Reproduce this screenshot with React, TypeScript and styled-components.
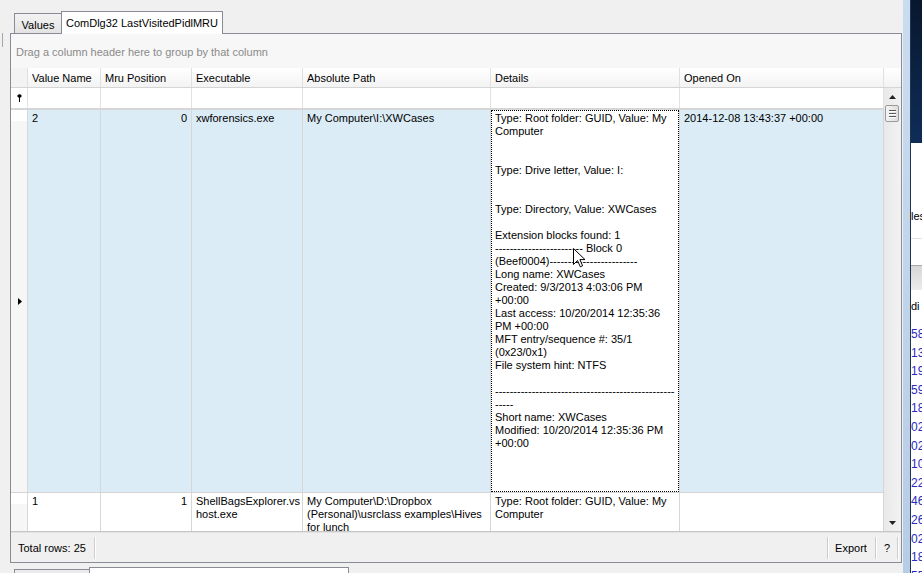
import React from 'react';
import styled, { createGlobalStyle } from 'styled-components';

const Global = createGlobalStyle`
  html, body { margin: 0; padding: 0; background: #f0f0f0; overflow: hidden; }
  body { font-family: "Liberation Sans", Arial, sans-serif; font-size: 11px; color: #000; }
  * { box-sizing: border-box; }
`;

const COLS = '17px 73px 91px 111px 188px 189px 204px';

const Page = styled.div`
  position: relative;
  display: flex;
  width: 922px;
  height: 573px;
  overflow: hidden;
  background: #f0f0f0;
`;

const LeftEdge = styled.div`
  width: 10px;
  flex: none;
  padding-top: 33px;
`;

const EdgeMark = styled.div`
  width: 1px;
  height: 14px;
  margin-left: 2px;
  background: #a7a7a7;
`;

const Main = styled.div`
  width: 892px;
  flex: none;
  display: flex;
  flex-direction: column;
`;

const TabStrip = styled.div`
  height: 33px;
  flex: none;
  display: flex;
  align-items: flex-end;
  padding-left: 4px;
  position: relative;
  z-index: 2;
`;

const Tab = styled.div<{ $active?: boolean; $w: number }>`
  width: ${p => p.$w}px;
  height: ${p => (p.$active ? 23 : 20)}px;
  margin-bottom: ${p => (p.$active ? -1 : 0)}px;
  border: 1px solid #898c95;
  border-bottom: none;
  ${p => (p.$active ? '' : 'border-right: none;')}
  background: ${p => (p.$active ? '#ffffff' : 'linear-gradient(#f3f3f3, #e3e3e3)')};
  display: flex;
  align-items: center;
  justify-content: center;
  padding-top: ${p => (p.$active ? 0 : 2)}px;
  white-space: nowrap;
`;

const Panel = styled.div`
  height: 530px;
  flex: none;
  border: 1px solid #898c95;
  display: flex;
  flex-direction: column;
  background: #f0f0f0;
`;

const GroupArea = styled.div`
  height: 34px;
  flex: none;
  background: #f7f7f7;
  color: #8a8a8a;
  padding: 12px 0 0 5px;
  line-height: 13px;
`;

const Grid = styled.div`
  height: 464px;
  flex: none;
  display: flex;
  flex-direction: column;
  background: #fff;
  border-bottom: 1px solid #c6c6c6;
`;

const HeaderRow = styled.div`
  display: grid;
  grid-template-columns: ${COLS} 17px;
  height: 20px;
  flex: none;
  background: linear-gradient(#ffffff, #f3f3f3);
  border-bottom: 1px solid #d5d5d5;
`;

const HeaderCell = styled.div<{ $indicator?: boolean; $last?: boolean }>`
  display: flex;
  align-items: center;
  padding-left: 4px;
  white-space: nowrap;
  overflow: hidden;
  border-right: ${p => (p.$last ? 'none' : '1px solid #e0e0e0')};
  ${p => (p.$indicator ? 'background: #f3f3f3;' : '')}
`;

const BodyWrap = styled.div`
  height: 443px;
  flex: none;
  display: flex;
`;

const Rows = styled.div`
  width: 873px;
  flex: none;
  display: flex;
  flex-direction: column;
  overflow: hidden;
`;

const FilterRow = styled.div`
  display: grid;
  grid-template-columns: ${COLS};
  height: 22px;
  flex: none;
  background: #fff;
  border-bottom: 2px solid #d6d6d6;
`;

const FilterCell = styled.div`
  border-right: 1px solid #e2e2e2;
  display: flex;
  align-items: center;
  justify-content: center;
`;

const DataRow = styled.div<{ $h: number; $bg: string }>`
  display: grid;
  grid-template-columns: ${COLS};
  height: ${p => p.$h}px;
  flex: none;
  background: ${p => p.$bg};
  border-bottom: 1px solid #d4d4d4;
`;

const Indicator = styled.div`
  border-right: 1px solid #d9d9d9;
  background: linear-gradient(#ffffff 0 11px, #f6f6f6 11px);
  display: flex;
  align-items: center;
  padding-left: 7px;
`;

const Cell = styled.div<{ $right?: boolean }>`
  border-right: 1px solid #d6d6d6;
  padding: 2px 4px 0 4px;
  line-height: 13px;
  white-space: pre;
  overflow: hidden;
  text-align: ${p => (p.$right ? 'right' : 'left')};
`;

const FocusCell = styled.div`
  border-right: 1px solid #d6d6d6;
  background: #fff;
  overflow: hidden;
`;

const FocusBox = styled.div`
  height: 100%;
  border: 1px dotted #000;
  padding: 1px 3px 0 3px;
  line-height: 13px;
  white-space: pre;
`;

const Line = styled.div`
  height: 13px;
`;

const Scrollbar = styled.div`
  width: 17px;
  flex: none;
  display: flex;
  flex-direction: column;
  background: linear-gradient(90deg, #e9e9e9, #f2f2f2);
`;

const ScrollBtn = styled.div`
  height: 17px;
  flex: none;
  display: flex;
  align-items: center;
  justify-content: center;
`;

const Thumb = styled.div`
  height: 17px;
  width: 14px;
  margin-left: 1px;
  flex: none;
  border: 1px solid #9a9a9a;
  border-radius: 2px;
  background: linear-gradient(90deg, #f4f4f4, #dedede);
  display: flex;
  flex-direction: column;
  align-items: center;
  justify-content: center;
  gap: 2px;
`;

const Grip = styled.div`
  width: 7px;
  height: 1px;
  background: #5a5a5a;
  box-shadow: 0 1px 0 #ffffff;
`;

const Track = styled.div`
  flex: 1;
`;

const Footer = styled.div`
  height: 30px;
  flex: none;
  display: flex;
  align-items: center;
  border-top: 1px solid #e2e2e2;
`;

const FooterItem = styled.div<{ $l: number; $r: number }>`
  padding: 0 ${p => p.$r}px 0 ${p => p.$l}px;
  white-space: nowrap;
`;

const Sep = styled.div`
  width: 2px;
  height: 22px;
  border-left: 1px solid #cdcdcd;
  border-right: 1px solid #ffffff;
`;

const Spacer = styled.div`
  flex: 1;
`;

const BottomStrip = styled.div`
  height: 10px;
  flex: none;
  display: flex;
  align-items: flex-end;
  padding-left: 4px;
`;

const LowTab = styled.div<{ $w: number; $h: number; $active?: boolean }>`
  width: ${p => p.$w}px;
  height: ${p => p.$h}px;
  border: 1px solid #898c95;
  border-bottom: none;
  ${p => (p.$active ? '' : 'border-right: none;')}
  background: ${p => (p.$active ? '#ffffff' : '#ebebeb')};
`;

const RightEdge = styled.div`
  width: 20px;
  flex: none;
  display: flex;
`;

const EdgeGap = styled.div`
  width: 1px;
  background: #f0f0f0;
`;

const Frame = styled.div`
  width: 7px;
  background: linear-gradient(#cadcef, #b5cde6);
`;

const FrameLine = styled.div`
  width: 1px;
  background: #1f3352;
`;

const OtherWindow = styled.div`
  flex: 1;
  display: flex;
  flex-direction: column;
  overflow: hidden;
`;

const Desktop = styled.div`
  height: 143px;
  flex: none;
  background: linear-gradient(#08172e, #0f2d57);
`;

const OtherContent = styled.div`
  flex: 1;
  background: #fff;
  display: flex;
  flex-direction: column;
  line-height: 13px;
  white-space: nowrap;
`;

const OtherText = styled.div<{ $top: number }>`
  margin-top: ${p => p.$top}px;
  height: 13px;
`;

const OtherRule = styled.div`
  margin-top: 15px;
  height: 1px;
  background: #e3e3e3;
`;

const OtherHeader = styled.div`
  margin-top: 26px;
  height: 25px;
  flex: none;
  border-top: 1px solid #a9a9a9;
  background: linear-gradient(#d7d7d7, #ececec);
`;

const NumberList = styled.div`
  margin-top: 12px;
  color: #2a2ac0;
  font-size: 12px;
  line-height: 18.6px;
`;

const Cursor = styled.svg`
  position: absolute;
  left: 573px;
  top: 248px;
`;

const detailLines = [
  'Type: Root folder: GUID, Value: My',
  'Computer',
  '',
  '',
  'Type: Drive letter, Value: I:',
  '',
  '',
  'Type: Directory, Value: XWCases',
  '',
  'Extension blocks found: 1',
  '------------------------ Block 0',
  '(Beef0004)------------------------',
  'Long name: XWCases',
  'Created: 9/3/2013 4:03:06 PM',
  '+00:00',
  'Last access: 10/20/2014 12:35:36',
  'PM +00:00',
  'MFT entry/sequence #: 35/1',
  '(0x23/0x1)',
  'File system hint: NTFS',
  '',
  '-------------------------------------------------',
  '-----',
  'Short name: XWCases',
  'Modified: 10/20/2014 12:35:36 PM',
  '+00:00',
];

const headers = ['Value Name', 'Mru Position', 'Executable', 'Absolute Path', 'Details', 'Opened On'];
const numbers = ['58', '13', '19', '59', '18', '02', '02', '10', '22', '46', '26', '02', '18', '55'];

const Pin = () => (
  <svg width="5" height="8" viewBox="0 0 5 8">
    <ellipse cx="2.5" cy="2" rx="2.2" ry="1.8" fill="#000" />
    <rect x="2" y="3" width="1" height="5" fill="#000" />
  </svg>
);

const RowArrow = () => (
  <svg width="4" height="7" viewBox="0 0 4 7">
    <polygon points="0,0 4,3.5 0,7" fill="#000" />
  </svg>
);

const UpArrow = () => (
  <svg width="7" height="4" viewBox="0 0 7 4">
    <polygon points="3.5,0 7,4 0,4" fill="#222" />
  </svg>
);

const DownArrow = () => (
  <svg width="7" height="4" viewBox="0 0 7 4">
    <polygon points="0,0 7,0 3.5,4" fill="#222" />
  </svg>
);

export default function App() {
  return (
    <>
      <Global />
      <Page>
        <LeftEdge>
          <EdgeMark />
        </LeftEdge>
        <Main>
          <TabStrip>
            <Tab $w={47}>Values</Tab>
            <Tab $w={162} $active>ComDlg32 LastVisitedPidlMRU</Tab>
          </TabStrip>
          <Panel>
            <GroupArea>Drag a column header here to group by that column</GroupArea>
            <Grid>
              <HeaderRow>
                <HeaderCell $indicator />
                {headers.map(h => (
                  <HeaderCell key={h}>{h}</HeaderCell>
                ))}
                <HeaderCell $last />
              </HeaderRow>
              <BodyWrap>
                <Rows>
                  <FilterRow>
                    <FilterCell>
                      <Pin />
                    </FilterCell>
                    {headers.map(h => (
                      <FilterCell key={h} />
                    ))}
                  </FilterRow>
                  <DataRow $h={383} $bg="#dbecf6">
                    <Indicator>
                      <RowArrow />
                    </Indicator>
                    <Cell>2</Cell>
                    <Cell $right>0</Cell>
                    <Cell>xwforensics.exe</Cell>
                    <Cell>{'My Computer\\I:\\XWCases'}</Cell>
                    <FocusCell>
                      <FocusBox>
                        {detailLines.map((l, i) => (
                          <Line key={i}>{l}</Line>
                        ))}
                      </FocusBox>
                    </FocusCell>
                    <Cell>2014-12-08 13:43:37 +00:00</Cell>
                  </DataRow>
                  <DataRow $h={52} $bg="#ffffff">
                    <Indicator />
                    <Cell>1</Cell>
                    <Cell $right>1</Cell>
                    <Cell>{'ShellBagsExplorer.vs\nhost.exe'}</Cell>
                    <Cell>{'My Computer\\D:\\Dropbox\n(Personal)\\usrclass examples\\Hives\nfor lunch'}</Cell>
                    <Cell>{'Type: Root folder: GUID, Value: My\nComputer'}</Cell>
                    <Cell />
                  </DataRow>
                </Rows>
                <Scrollbar>
                  <ScrollBtn>
                    <UpArrow />
                  </ScrollBtn>
                  <Thumb>
                    <Grip />
                    <Grip />
                    <Grip />
                  </Thumb>
                  <Track />
                  <ScrollBtn>
                    <DownArrow />
                  </ScrollBtn>
                </Scrollbar>
              </BodyWrap>
            </Grid>
            <Footer>
              <FooterItem $l={7} $r={8}>Total rows: 25</FooterItem>
              <Sep />
              <Spacer />
              <Sep />
              <FooterItem $l={6} $r={8}>Export</FooterItem>
              <Sep />
              <FooterItem $l={7} $r={7}>?</FooterItem>
              <Sep />
              <FooterItem $l={2} $r={0} />
            </Footer>
          </Panel>
          <BottomStrip>
            <LowTab $w={75} $h={4} />
            <LowTab $w={260} $h={6} $active />
          </BottomStrip>
        </Main>
        <RightEdge>
          <EdgeGap />
          <Frame />
          <FrameLine />
          <OtherWindow>
            <Desktop />
            <OtherContent>
              <OtherText $top={67}>les</OtherText>
              <OtherRule />
              <OtherHeader />
              <OtherText $top={10}>di</OtherText>
              <NumberList>
                {numbers.map((n, i) => (
                  <div key={i}>{n}</div>
                ))}
              </NumberList>
            </OtherContent>
          </OtherWindow>
        </RightEdge>
        <Cursor width="13" height="20" viewBox="0 0 13 20">
          <path
            d="M0.5 0.5 L0.5 16.5 L4.5 12.5 L7.3 18.8 L9.6 17.8 L6.9 11.6 L12 11.6 Z"
            fill="#fff"
            stroke="#000"
            strokeWidth="1"
            strokeLinejoin="miter"
          />
        </Cursor>
      </Page>
    </>
  );
}
